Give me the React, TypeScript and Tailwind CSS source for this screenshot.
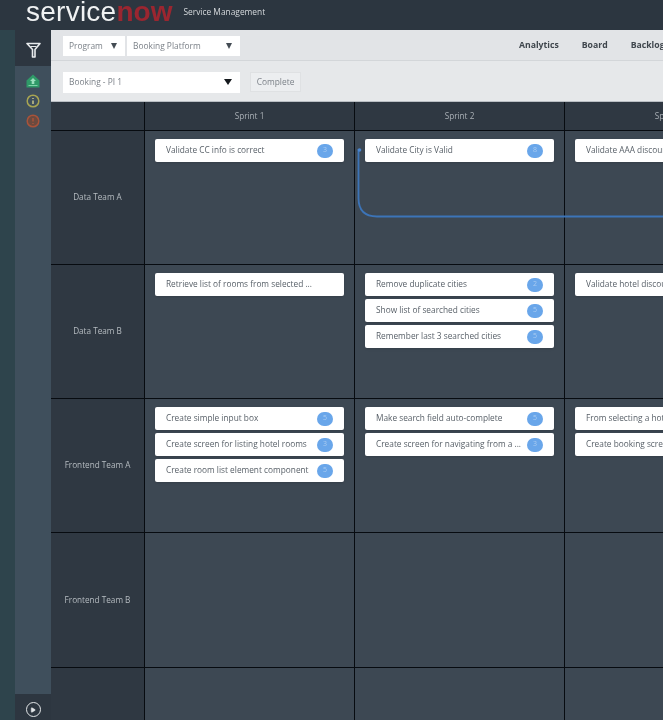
import { Play } from "lucide-react";

type Task = { title: string; points?: string };

const sprints = ["Sprint 1", "Sprint 2", "Sprint 3"];

const rows: { team: string; cells: Task[][]; tall?: boolean }[] = [
  {
    team: "Data Team A",
    cells: [
      [{ title: "Validate CC info is correct", points: "3" }],
      [{ title: "Validate City is Valid", points: "8" }],
      [{ title: "Validate AAA discount", points: "3" }],
    ],
  },
  {
    team: "Data Team B",
    cells: [
      [{ title: "Retrieve list of rooms from selected ..." }],
      [
        { title: "Remove duplicate cities", points: "2" },
        { title: "Show list of searched cities", points: "5" },
        { title: "Remember last 3 searched cities", points: "5" },
      ],
      [{ title: "Validate hotel discount", points: "3" }],
    ],
  },
  {
    team: "Frontend Team A",
    cells: [
      [
        { title: "Create simple input box", points: "5" },
        { title: "Create screen for listing hotel rooms", points: "3" },
        { title: "Create room list element component", points: "5" },
      ],
      [
        { title: "Make search field auto-complete", points: "5" },
        { title: "Create screen for navigating from a ...", points: "3" },
      ],
      [
        { title: "From selecting a hotel room", points: "5" },
        { title: "Create booking screen", points: "3" },
      ],
    ],
  },
  { team: "Frontend Team B", cells: [[], [], []], tall: true },
  { team: "", cells: [[], [], []] },
];

function Caret() {
  return <span className="h-0 w-0 border-x-[3.5px] border-t-[6px] border-x-transparent border-t-[#444c54]" />;
}

function TaskCard({ task }: { task: Task }) {
  return (
    <div className="flex h-[23px] items-center justify-between rounded-[2px] bg-white pl-[11px] pr-[11px] shadow-sm">
      <span className="whitespace-nowrap text-[8.3px] text-[#575f67]">{task.title}</span>
      {task.points && (
        <span className="flex h-[14px] w-4 items-center justify-center rounded-full bg-[#69a6ea] text-[7px] text-[#a9cbf0]">
          {task.points}
        </span>
      )}
    </div>
  );
}

export default function App() {
  return (
    <div className="flex h-[720px] w-[663px] flex-col overflow-hidden bg-[#2d3640] font-['Open_Sans',sans-serif] blur-[0.5px]">
      {/* top bar */}
      <header className="flex h-[30px] shrink-0 items-start bg-[#2c3640] pl-[26px]">
        <span className="font-['Liberation_Sans',sans-serif] text-[28px] leading-[23px] tracking-[0.25px] text-[#f0f2f3]">
          service
        </span>
        <span className="font-['Liberation_Sans',sans-serif] text-[28px] font-bold leading-[23px] tracking-[0px] text-[#9a2630]">
          now
        </span>
        <span className="ml-[11px] text-[8.4px] leading-[24px] text-[#d5d9dc]">Service Management</span>
      </header>

      <div className="flex min-h-0 flex-1">
        <div className="w-[15px] shrink-0 bg-[#2e444c]" />

        {/* side rail */}
        <aside className="flex w-9 shrink-0 flex-col">
          <div className="flex h-9 items-center justify-center bg-[#2d3640] pt-[4px]">
            <svg width="15" height="16" viewBox="0 0 15 16" fill="none" stroke="#e8ebed">
              <path d="M1 1.5H14L9 7.5V15H6.5V7.5Z" strokeWidth="1.6" strokeLinejoin="round" />
              <path d="M4.5 4.5H10.5" strokeWidth="1" />
            </svg>
          </div>
          <div className="flex flex-1 flex-col items-center gap-[6px] bg-[#3f4f5c] pt-2">
            <svg width="14" height="14" viewBox="0 0 14 14">
              <path d="M7 .5L13.5 6.5V13.5H.5V6.5Z" fill="#2f9a68" />
              <path d="M7 4L10 7H8.3V10H5.7V7H4Z" fill="#9be0bd" />
              <path d="M2.5 11.5H11.5" stroke="#7fd3a8" strokeWidth="1" />
            </svg>
            <svg width="14" height="14" viewBox="0 0 14 14" fill="none">
              <circle cx="7" cy="7" r="5.8" stroke="#a9a552" strokeWidth="1.5" />
              <path d="M7 6.5V10M7 4V5" stroke="#c9c68a" strokeWidth="1.5" />
            </svg>
            <svg width="14" height="14" viewBox="0 0 14 14" fill="none">
              <circle cx="7" cy="7" r="5.8" fill="#6b4a3f" stroke="#a8533a" strokeWidth="1.5" />
              <path d="M7 4V7.5M7 9V10" stroke="#a8533a" strokeWidth="1.5" />
            </svg>
          </div>
          <div className="flex h-[26px] items-center justify-center bg-[#2d3640] pt-[5px]">
            <span className="flex h-[15px] w-[15px] items-center justify-center rounded-full border-[1.5px] border-[#e3e6e8]">
              <Play size={6} className="fill-[#e3e6e8] text-[#e3e6e8]" />
            </span>
          </div>
        </aside>

        <main className="relative min-w-0 flex-1">
          {/* toolbar */}
          <div className="flex h-[72px] flex-col bg-[#e6e8ea] shadow-[inset_0_-1px_0_#b9bec3]">
            <div className="flex h-[31px] items-center border-b border-[#d3d6d9] bg-[#e2e4e7] pl-3 pt-[2px]">
              <div className="flex h-[20px] w-[62px] shrink-0 items-center justify-between bg-white pl-[6px] pr-[8px] text-[8.4px] text-[#7b8188]">
                Program <Caret />
              </div>
              <div className="ml-[2px] flex h-[20px] w-[113px] shrink-0 items-center justify-between bg-white pl-[6px] pr-[8px] text-[8.4px] text-[#7b8188]">
                Booking Platform <Caret />
              </div>
              <nav className="ml-[279px] flex shrink-0 gap-[23px] whitespace-nowrap text-[8.7px] font-bold text-[#3f464d]">
                <span>Analytics</span>
                <span>Board</span>
                <span>Backlog</span>
              </nav>
            </div>
            <div className="flex flex-1 items-center pl-3 pt-[1px]">
              <div className="flex h-[21px] w-[177px] items-center justify-between bg-white pl-[6px] pr-[8px] text-[8.4px] text-[#7b8188]">
                Booking - PI 1
                <span className="h-0 w-0 border-x-[4px] border-t-[6px] border-x-transparent border-t-[#15191d]" />
              </div>
              <div className="ml-[10px] flex h-[20px] w-[51px] items-center justify-center border border-[#dfe1e3] bg-[#eceef0] text-[8.4px] text-[#7b8188]">
                Complete
              </div>
            </div>
          </div>

          {/* board */}
          <div className="grid w-[731px] grid-cols-[93px_209px_209px_209px] gap-px bg-[#070b10]">
            <div className="h-7 bg-[#2f3842]" />
            {sprints.map((sprint) => (
              <div key={sprint} className="flex h-7 items-center justify-center bg-[#2f3842] text-[8.2px] text-[#aab0b6]">
                {sprint}
              </div>
            ))}
            {rows.map((row, i) => (
              <div key={i} className="contents">
                <div
                  className={`flex items-center justify-center bg-[#2f3842] text-[8.2px] text-[#b6bcc1] ${
                    row.tall ? "h-[134px]" : "h-[133px]"
                  }`}
                >
                  {row.team}
                </div>
                {row.cells.map((tasks, j) => (
                  <div key={j} className="flex flex-col gap-[3px] bg-[#3d4853] px-[10px] pt-2">
                    {tasks.map((task) => (
                      <TaskCard key={task.title} task={task} />
                    ))}
                  </div>
                ))}
              </div>
            ))}
          </div>

          {/* dependency line */}
          <svg className="absolute left-[300px] top-[112px]" width="312" height="80" fill="none">
            <path d="M8 8 H7.5 V56 Q7.5 74.5 26 74.5 H312" stroke="#3c74b8" strokeWidth="1.8" />
            <circle cx="8.5" cy="8" r="1.8" fill="#4a86d0" />
          </svg>
        </main>
      </div>
    </div>
  );
}
